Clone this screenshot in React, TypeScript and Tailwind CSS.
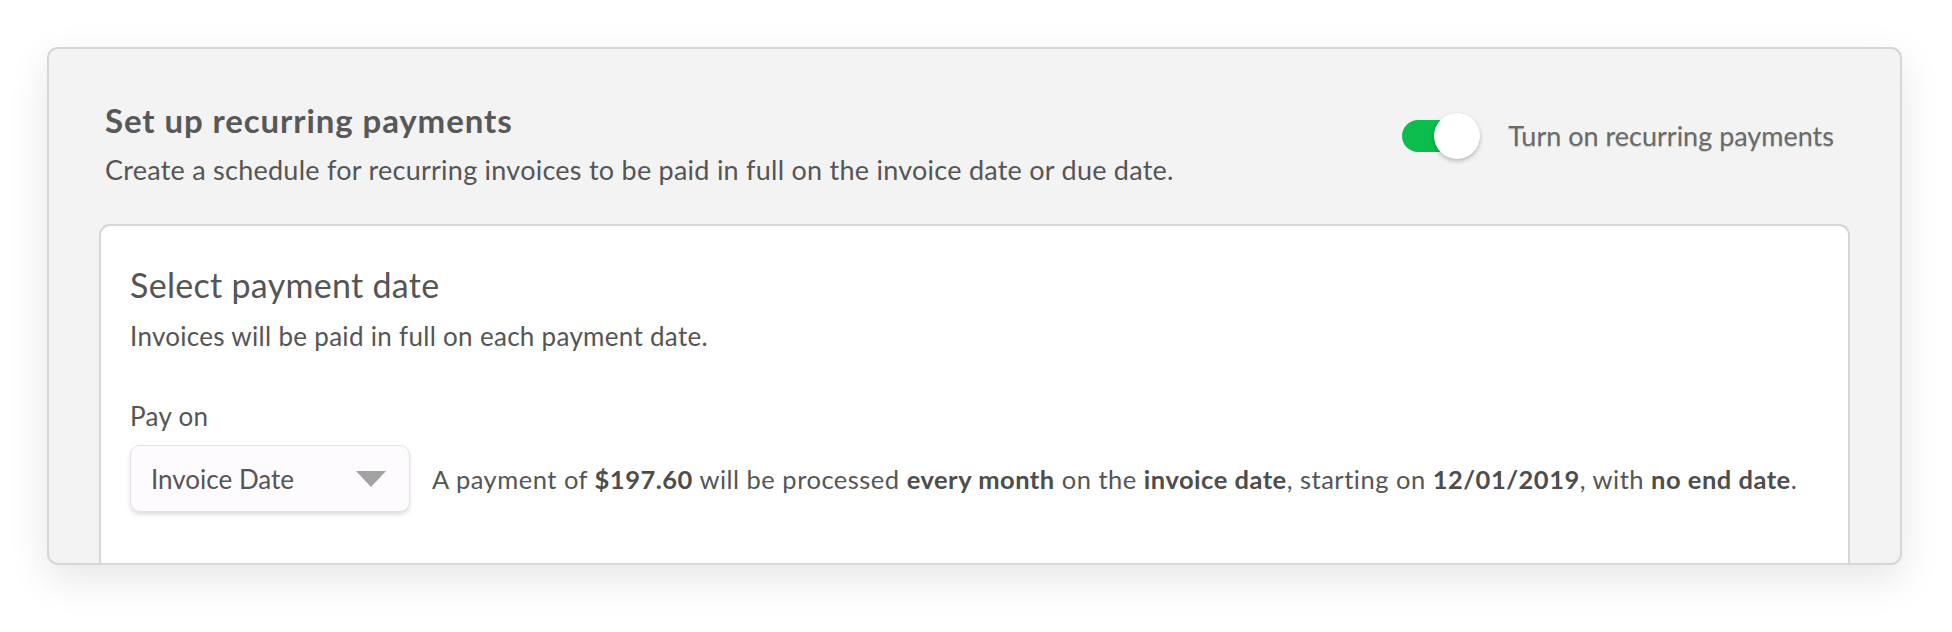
import { useState } from 'react'

function Toggle({ on, onChange }: { on: boolean; onChange: (v: boolean) => void }) {
  return (
    <button
      type="button"
      onClick={() => onChange(!on)}
      className="relative w-[78px] h-[46px] shrink-0 cursor-pointer"
    >
      <span
        className={`absolute left-0 top-[7px] w-[64px] h-[32px] rounded-full ${on ? 'bg-[#0bbd4d]' : 'bg-[#c9c9c9]'}`}
      />
      <span
        className={`absolute top-0 w-[46px] h-[46px] rounded-full bg-white shadow-[0_2px_4px_rgba(0,0,0,0.25)] ${on ? 'left-[32px]' : 'left-[-4px]'}`}
      />
    </button>
  )
}

export default function App() {
  const [recurring, setRecurring] = useState(true)

  return (
    <div className="min-h-screen bg-white pt-[47px] pl-[47px] font-['Lato','Liberation_Sans',sans-serif] text-[#555555]">
      <div className="w-[1855px] h-[518px] flex flex-col bg-[#f3f3f3] border-2 border-[#d6d6d6] rounded-[11px] overflow-hidden shadow-[0_14px_40px_rgba(0,0,0,0.10)]">
        {/* Header */}
        <div className="flex items-start pt-[53px] pl-[56px] pr-[66px]">
          <div className="flex-1">
            <h2 className="text-[33px] leading-[36px] font-bold tracking-[0.9px] text-[#585858]">Set up recurring payments</h2>
            <p className="mt-[16px] text-[27px] leading-[32px] tracking-[0.25px]">
              Create a schedule for recurring invoices to be paid in full on the invoice date or due date.
            </p>
          </div>
          <div className="mt-[11px] flex items-center">
            <Toggle on={recurring} onChange={setRecurring} />
            <span className="ml-[28px] text-[27px] leading-[32px] text-[#6a6a6a] [text-shadow:0_1px_1px_rgba(0,0,0,0.18)]">
              Turn on recurring payments
            </span>
          </div>
        </div>

        {/* Payment date card */}
        <div className="flex-1 mt-[38px] mx-[50px] -mb-[4px] bg-white border-2 border-[#d6d6d6] rounded-t-[11px] pt-[39px] pl-[29px]">
          <h3 className="text-[34px] leading-[40px] font-normal tracking-[0.3px]">Select payment date</h3>
          <p className="mt-[15px] text-[26px] leading-[32px] tracking-[0.3px]">Invoices will be paid in full on each payment date.</p>

          <label className="block mt-[48px] text-[26px] leading-[32px] tracking-[0.3px]">Pay on</label>
          <div className="mt-[13px] flex items-center">
            <button
              type="button"
              className="w-[280px] h-[67px] flex items-center justify-between pl-[20px] pr-[23px] bg-[#fdfbfd] border border-[#e3e3e3] rounded-[10px] shadow-[0_3px_4px_rgba(0,0,0,0.12)]"
            >
              <span className="text-[26px] leading-[32px] text-[#555555]">Invoice Date</span>
              <svg width="30" height="16" viewBox="0 0 30 16" className="shrink-0">
                <path d="M0 0 H30 L15 16 Z" fill="#a3a3a3" />
              </svg>
            </button>
            <p className="ml-[22px] text-[25.5px] leading-[30px] tracking-[0.5px]">
              A payment of <b className="font-bold text-[#4d4d4d]">$197.60</b> will be processed{' '}
              <b className="font-bold text-[#4d4d4d]">every month</b> on the{' '}
              <b className="font-bold text-[#4d4d4d]">invoice date</b>, starting on{' '}
              <b className="font-bold text-[#4d4d4d]">12/01/2019</b>, with{' '}
              <b className="font-bold text-[#4d4d4d]">no end date</b>.
            </p>
          </div>
        </div>
      </div>
    </div>
  )
}
